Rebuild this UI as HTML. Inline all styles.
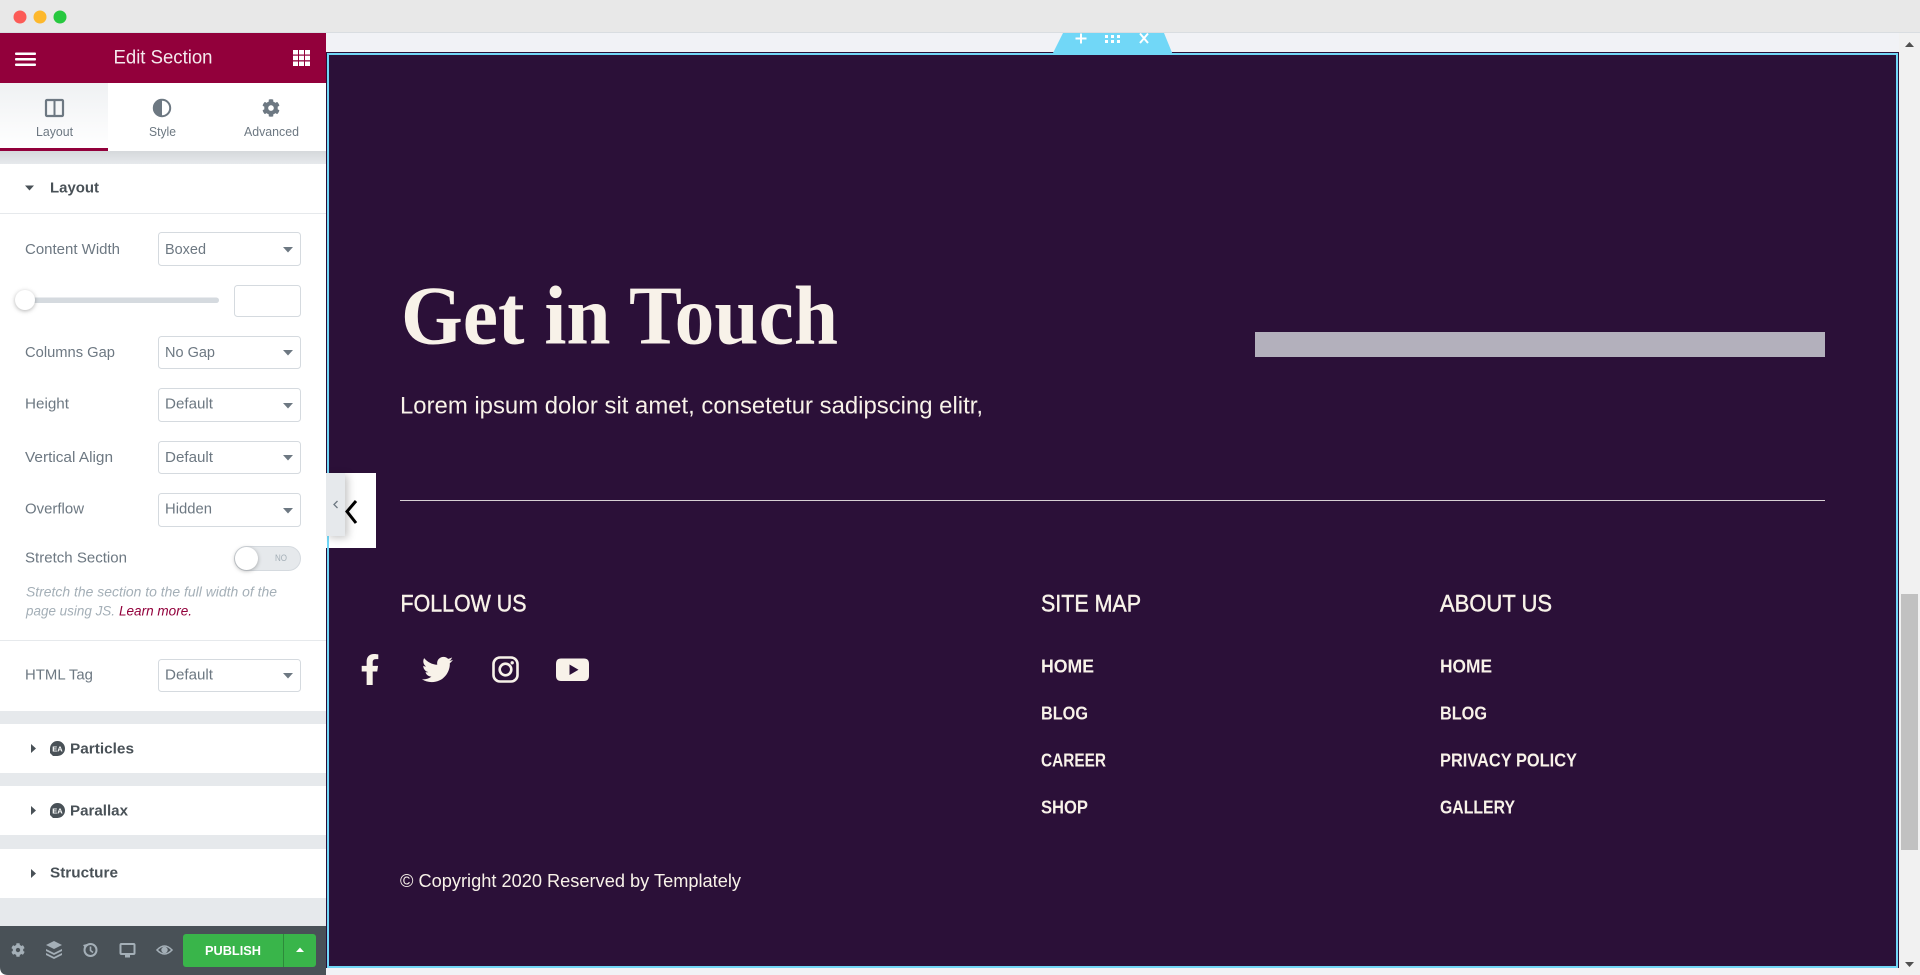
<!DOCTYPE html>
<html lang="en">
<head>
<meta charset="utf-8">
<title>Edit Section</title>
<style>
html,body{margin:0;padding:0;width:1920px;height:975px;overflow:hidden;background:#f1f2f6}
svg{display:block}
text{font-family:"Liberation Sans",sans-serif}
.lbl{font-size:14.5px;fill:#6d7882}
.tab{font-size:12.5px;fill:#6d7882}
.sec{font-size:14.5px;font-weight:700;fill:#495157}
.cream{fill:#f8f2e9}
.link{font-size:18px;font-weight:700;fill:#f8f2e9}
.hd{font-size:24px;fill:#f8f2e9;stroke:#f8f2e9;stroke-width:.45px}
.sel{fill:#fff;stroke:#d5dadf;stroke-width:1}
.shadow{filter:drop-shadow(0 1px 2px rgba(0,0,0,.3))}
.shadow2{filter:drop-shadow(3px 2px 4px rgba(0,0,0,.22))}
</style>
</head>
<body>
<svg width="1920" height="975" viewBox="0 0 1920 975" xmlns="http://www.w3.org/2000/svg">
<defs>
<linearGradient id="tabg" x1="0" y1="0" x2="0" y2="1"><stop offset="0" stop-color="#eff1f3"/><stop offset="1" stop-color="#ffffff"/></linearGradient>
<linearGradient id="shg" x1="0" y1="0" x2="0" y2="1"><stop offset="0" stop-color="#d5d8db"/><stop offset="1" stop-color="#e6e9ec"/></linearGradient>
<path id="cog" d="M487.4 315.7l-42.6-24.6c4.3-23.2 4.3-47 0-70.2l42.6-24.6c4.9-2.8 7.1-8.6 5.5-14-11.1-35.6-30-67.8-54.7-94.6-3.8-4.1-10-5.1-14.8-2.3L380.8 110c-17.9-15.4-38.5-27.3-60.8-35.1V25.8c0-5.6-3.9-10.5-9.4-11.7-36.7-8.2-74.3-7.8-109.2 0-5.5 1.2-9.4 6.1-9.4 11.7V75c-22.2 7.9-42.8 19.8-60.8 35.1L88.7 85.5c-4.9-2.8-11-1.9-14.8 2.3-24.7 26.7-43.6 58.9-54.7 94.6-1.7 5.4.6 11.2 5.5 14L67.3 221c-4.3 23.2-4.3 47 0 70.2l-42.6 24.6c-4.9 2.8-7.1 8.6-5.5 14 11.1 35.6 30 67.8 54.7 94.6 3.8 4.1 10 5.1 14.8 2.3l42.6-24.6c17.9 15.4 38.5 27.3 60.8 35.1v49.2c0 5.6 3.9 10.5 9.4 11.7 36.7 8.2 74.3 7.8 109.2 0 5.5-1.2 9.4-6.1 9.4-11.7v-49.2c22.2-7.9 42.8-19.8 60.8-35.1l42.6 24.6c4.9 2.8 11 1.9 14.8-2.3 24.7-26.7 43.6-58.9 54.7-94.6 1.5-5.5-.7-11.3-5.6-14.1zM256 336c-44.1 0-80-35.9-80-80s35.9-80 80-80 80 35.9 80 80-35.9 80-80 80z"/>
</defs>

<!-- canvas background -->
<rect x="0" y="0" width="1920" height="975" fill="#f1f2f6"/>

<!-- window chrome -->
<rect x="0" y="0" width="1920" height="33" fill="#e8e8e8"/>
<rect x="0" y="32" width="1920" height="1" fill="#d9dde1"/>
<circle cx="20" cy="17" r="6.5" fill="#fc5b57"/>
<circle cx="40" cy="17" r="6.5" fill="#fdb82c"/>
<circle cx="60" cy="17" r="6.5" fill="#27c83f"/>

<!-- section -->
<rect x="326" y="52" width="1573" height="916" fill="#2b1038"/>
<rect x="328" y="54" width="1569" height="913" fill="none" stroke="#71d7f7" stroke-width="2"/>

<!-- section handle -->
<path d="M1063 33H1164L1173 55H1052Z" fill="#71d7f7"/>
<path d="M1081 33.5V43.5M1075.5 38.5H1086.5" stroke="#fff" stroke-width="2" fill="none"/>
<g fill="#fff">
<rect x="1105" y="35" width="3" height="3"/><rect x="1111" y="35" width="3" height="3"/><rect x="1117" y="35" width="3" height="3"/>
<rect x="1105" y="40" width="3" height="3"/><rect x="1111" y="40" width="3" height="3"/><rect x="1117" y="40" width="3" height="3"/>
</g>
<path d="M1140 33.5L1148 43M1148 33.5L1140 43" stroke="#fff" stroke-width="2" fill="none"/>

<!-- hero -->
<text x="401" y="343.5" font-size="84" font-weight="700" class="cream" style="font-family:'Liberation Serif',serif" textLength="437" lengthAdjust="spacingAndGlyphs">Get in Touch</text>
<text x="400" y="413.5" font-size="24" class="cream" textLength="583" lengthAdjust="spacingAndGlyphs">Lorem ipsum dolor sit amet, consetetur sadipscing elitr,</text>
<rect x="1255" y="332" width="570" height="25" fill="#b3b0bc"/>
<rect x="400" y="500" width="1425" height="1" fill="#d8d0d4"/>

<!-- footer cols -->
<text x="400.5" y="611.5" class="hd" textLength="126" lengthAdjust="spacingAndGlyphs">FOLLOW US</text>
<text x="1041" y="611.5" class="hd" textLength="100" lengthAdjust="spacingAndGlyphs">SITE MAP</text>
<text x="1440" y="611.5" class="hd" textLength="112" lengthAdjust="spacingAndGlyphs">ABOUT US</text>

<text x="1041" y="672.5" class="link" textLength="53" lengthAdjust="spacingAndGlyphs">HOME</text>
<text x="1041" y="719.5" class="link" textLength="47" lengthAdjust="spacingAndGlyphs">BLOG</text>
<text x="1041" y="766.5" class="link" textLength="65" lengthAdjust="spacingAndGlyphs">CAREER</text>
<text x="1041" y="813.5" class="link" textLength="47" lengthAdjust="spacingAndGlyphs">SHOP</text>
<text x="1440" y="672.5" class="link" textLength="52" lengthAdjust="spacingAndGlyphs">HOME</text>
<text x="1440" y="719.5" class="link" textLength="47" lengthAdjust="spacingAndGlyphs">BLOG</text>
<text x="1440" y="766.5" class="link" textLength="137" lengthAdjust="spacingAndGlyphs">PRIVACY POLICY</text>
<text x="1440" y="813.5" class="link" textLength="75" lengthAdjust="spacingAndGlyphs">GALLERY</text>

<text x="400" y="887" font-size="18" class="cream" textLength="341" lengthAdjust="spacingAndGlyphs">© Copyright 2020 Reserved by Templately</text>

<!-- social icons -->
<svg x="360" y="654" width="20" height="31" viewBox="0 0 320 512" preserveAspectRatio="xMidYMid meet"><path fill="#f8f2e9" d="M279.14 288l14.22-92.66h-88.91v-60.13c0-25.35 12.42-50.06 52.24-50.06h40.42V6.26S260.43 0 225.36 0c-73.22 0-121.08 44.38-121.08 124.72v70.62H22.89V288h81.39v224h100.17V288z"/></svg>
<svg x="422" y="654" width="31" height="31" viewBox="0 0 512 512"><path fill="#f8f2e9" d="M459.37 151.716c.325 4.548.325 9.097.325 13.645 0 138.72-105.583 298.558-298.558 298.558-59.452 0-114.68-17.219-161.137-47.106 8.447.974 16.568 1.299 25.34 1.299 49.055 0 94.213-16.568 130.274-44.832-46.132-.975-84.792-31.188-98.112-72.772 6.498.974 12.995 1.624 19.818 1.624 9.421 0 18.843-1.3 27.614-3.573-48.081-9.747-84.143-51.98-84.143-102.985v-1.299c13.969 7.797 30.214 12.67 47.431 13.319-28.264-18.843-46.781-51.005-46.781-87.391 0-19.492 5.197-37.36 14.294-52.954 51.655 63.675 129.3 105.258 216.365 109.807-1.624-7.797-2.599-15.918-2.599-24.04 0-57.828 46.782-104.934 104.934-104.934 30.213 0 57.502 12.67 76.67 33.137 23.715-4.548 46.456-13.645 66.599-25.34-7.798 24.366-24.366 44.833-46.132 57.827 21.117-2.273 41.584-8.122 60.426-16.243-14.292 20.791-32.161 39.308-52.628 54.253z"/></svg>
<rect x="493.5" y="657.5" width="24" height="24" rx="6.5" fill="none" stroke="#f8f2e9" stroke-width="2.6"/>
<circle cx="505.5" cy="669.5" r="5.8" fill="none" stroke="#f8f2e9" stroke-width="2.6"/>
<circle cx="512.2" cy="662.8" r="1.7" fill="#f8f2e9"/>
<path fill="#f8f2e9" fill-rule="evenodd" d="M561 658.5H584Q589 658.5 589 664V675.5Q589 681 584 681H561Q556 681 556 675.5V664Q556 658.5 561 658.5ZM569.5 664.5V675L578.5 669.8Z"/>

<!-- scrollbar -->
<rect x="1899" y="33" width="21" height="942" fill="#f1f1f1"/>
<rect x="1901" y="594" width="17" height="256" fill="#c1c1c1"/>
<path d="M1905 47L1909.5 42L1914 47Z" fill="#505050"/>
<path d="M1905 962L1909.5 967L1914 962Z" fill="#505050"/>
<rect x="0" y="968" width="1899" height="7" fill="#f1f2f6"/>

<!-- collapse handle -->
<rect x="326" y="473" width="50" height="75" fill="#fff"/>
<rect x="327" y="536" width="2" height="12" fill="#71d7f7"/>
<rect class="shadow2" x="326" y="473" width="19" height="63" fill="#e6e9ec"/>
<path d="M337.5 501L334 504.5L337.5 508" stroke="#6d7882" stroke-width="1.3" fill="none"/>
<path d="M356 501L347 511.5L356 523" stroke="#000" stroke-width="3" fill="none"/>

<!-- panel -->
<rect x="0" y="33" width="326" height="942" fill="#fff"/>
<rect x="0" y="33" width="326" height="50" fill="#92003b"/>
<g fill="#fff">
<rect x="15" y="52.5" width="21" height="2.5" rx="1"/><rect x="15" y="58" width="21" height="2.5" rx="1"/><rect x="15" y="63.5" width="21" height="2.5" rx="1"/>
<rect x="293" y="50" width="5" height="4.5"/><rect x="299" y="50" width="5" height="4.5"/><rect x="305" y="50" width="5" height="4.5"/>
<rect x="293" y="55.7" width="5" height="4.5"/><rect x="299" y="55.7" width="5" height="4.5"/><rect x="305" y="55.7" width="5" height="4.5"/>
<rect x="293" y="61.5" width="5" height="4.5"/><rect x="299" y="61.5" width="5" height="4.5"/><rect x="305" y="61.5" width="5" height="4.5"/>
</g>
<text x="113.5" y="63.5" font-size="19" fill="#f4e9ed" textLength="99" lengthAdjust="spacingAndGlyphs">Edit Section</text>

<!-- tabs -->
<rect x="0" y="83" width="108" height="65" fill="url(#tabg)"/>
<rect x="0" y="148" width="108" height="3" fill="#92003b"/>
<rect x="46" y="100" width="17" height="16" rx="1" fill="none" stroke="#6d7882" stroke-width="2.2"/>
<rect x="53.5" y="100" width="2" height="16" fill="#6d7882"/>
<circle cx="162" cy="108" r="8.2" fill="#fff" stroke="#6d7882" stroke-width="2"/>
<path d="M162 99A9 9 0 0 0 162 117Z" fill="#6d7882"/>
<svg x="262" y="99" width="18" height="18" viewBox="0 0 512 512"><use href="#cog" fill="#6d7882"/></svg>
<text x="36" y="136" class="tab" textLength="37" lengthAdjust="spacingAndGlyphs">Layout</text>
<text x="149" y="136" class="tab" textLength="27" lengthAdjust="spacingAndGlyphs">Style</text>
<text x="244" y="136" class="tab" textLength="55" lengthAdjust="spacingAndGlyphs">Advanced</text>

<!-- Layout section -->
<rect x="0" y="151" width="326" height="13" fill="url(#shg)"/>
<path d="M25 185.5H34L29.5 190.5Z" fill="#495157"/>
<text x="50" y="192.5" class="sec" textLength="49" lengthAdjust="spacingAndGlyphs">Layout</text>
<rect x="0" y="213" width="326" height="1" fill="#e6e9ec"/>

<text x="25" y="254" class="lbl" textLength="95" lengthAdjust="spacingAndGlyphs">Content Width</text>
<rect class="sel" x="158.5" y="232.5" width="142" height="33" rx="3"/>
<text x="165" y="254" class="lbl" textLength="41" lengthAdjust="spacingAndGlyphs">Boxed</text>
<path d="M283 247H293L288 252.5Z" fill="#6d7882"/>

<rect x="30" y="297.5" width="189" height="5.5" rx="2.7" fill="#d5dadf"/>
<circle class="shadow" cx="25" cy="300" r="10" fill="#fff"/>
<rect class="sel" x="234.5" y="285.5" width="66" height="31" rx="3"/>

<text x="25" y="357" class="lbl" textLength="90" lengthAdjust="spacingAndGlyphs">Columns Gap</text>
<rect class="sel" x="158.5" y="336.5" width="142" height="32" rx="3"/>
<text x="165" y="357" class="lbl" textLength="50" lengthAdjust="spacingAndGlyphs">No Gap</text>
<path d="M283 350H293L288 355.5Z" fill="#6d7882"/>

<text x="25" y="408.5" class="lbl" textLength="44" lengthAdjust="spacingAndGlyphs">Height</text>
<rect class="sel" x="158.5" y="388.5" width="142" height="33" rx="3"/>
<text x="165" y="408.5" class="lbl" textLength="48" lengthAdjust="spacingAndGlyphs">Default</text>
<path d="M283 403H293L288 408.5Z" fill="#6d7882"/>

<text x="25" y="462" class="lbl" textLength="88" lengthAdjust="spacingAndGlyphs">Vertical Align</text>
<rect class="sel" x="158.5" y="441.5" width="142" height="32" rx="3"/>
<text x="165" y="462" class="lbl" textLength="48" lengthAdjust="spacingAndGlyphs">Default</text>
<path d="M283 455H293L288 460.5Z" fill="#6d7882"/>

<text x="25" y="513.5" class="lbl" textLength="59" lengthAdjust="spacingAndGlyphs">Overflow</text>
<rect class="sel" x="158.5" y="493.5" width="142" height="33" rx="3"/>
<text x="165" y="513.5" class="lbl" textLength="47" lengthAdjust="spacingAndGlyphs">Hidden</text>
<path d="M283 508H293L288 513.5Z" fill="#6d7882"/>

<text x="25" y="562.5" class="lbl" textLength="102" lengthAdjust="spacingAndGlyphs">Stretch Section</text>
<rect x="234.5" y="546.5" width="66" height="24" rx="12" fill="#e6e9ec" stroke="#d5dadf"/>
<circle class="shadow" cx="246.5" cy="558.5" r="11.5" fill="#fff"/>
<text x="275" y="561" font-size="9" fill="#a4afb7" textLength="12" lengthAdjust="spacingAndGlyphs">NO</text>

<text x="26" y="596.5" font-size="13.5" font-style="italic" fill="#a4afb7" textLength="251" lengthAdjust="spacingAndGlyphs">Stretch the section to the full width of the</text>
<text x="26" y="615.5" font-size="13.5" font-style="italic" fill="#a4afb7" textLength="89" lengthAdjust="spacingAndGlyphs">page using JS.</text>
<text x="119" y="615.5" font-size="13.5" font-style="italic" fill="#92003b" textLength="73" lengthAdjust="spacingAndGlyphs">Learn more.</text>
<rect x="0" y="640" width="326" height="1" fill="#e6e9ec"/>

<text x="25" y="679.5" class="lbl" textLength="68" lengthAdjust="spacingAndGlyphs">HTML Tag</text>
<rect class="sel" x="158.5" y="659.5" width="142" height="32" rx="3"/>
<text x="165" y="679.5" class="lbl" textLength="48" lengthAdjust="spacingAndGlyphs">Default</text>
<path d="M283 673H293L288 678.5Z" fill="#6d7882"/>

<!-- collapsed sections -->
<rect x="0" y="711" width="326" height="13" fill="#e6e9ec"/>
<path d="M31 744L36 748.5L31 753Z" fill="#495157"/>
<path d="M57.5 741A7.5 7.5 0 1 1 57.5 756H53L50 753V748.5A7.5 7.5 0 0 1 57.5 741Z" fill="#495157"/>
<text x="57.5" y="751.5" font-size="7.5" font-weight="700" fill="#fff" text-anchor="middle">EA</text>
<text x="70" y="753.5" class="sec" textLength="64" lengthAdjust="spacingAndGlyphs">Particles</text>

<rect x="0" y="773" width="326" height="13" fill="#e6e9ec"/>
<path d="M31 806L36 810.5L31 815Z" fill="#495157"/>
<path d="M57.5 803A7.5 7.5 0 1 1 57.5 818H53L50 815V810.5A7.5 7.5 0 0 1 57.5 803Z" fill="#495157"/>
<text x="57.5" y="813.5" font-size="7.5" font-weight="700" fill="#fff" text-anchor="middle">EA</text>
<text x="70" y="815.5" class="sec" textLength="58" lengthAdjust="spacingAndGlyphs">Parallax</text>

<rect x="0" y="835" width="326" height="14" fill="#e6e9ec"/>
<path d="M31 869L36 873.5L31 878Z" fill="#495157"/>
<text x="50" y="877.5" class="sec" textLength="68" lengthAdjust="spacingAndGlyphs">Structure</text>

<rect x="0" y="898" width="326" height="28" fill="#e6e9ec"/>

<!-- bottom bar -->
<path d="M0 926H326V975H8Q0 975 0 967Z" fill="#495157"/>
<svg x="11" y="943" width="14" height="14" viewBox="0 0 512 512"><use href="#cog" fill="#a4afb7"/></svg>
<g fill="#a4afb7">
<path d="M54 941L62 945L54 949L46 945Z"/>
<path d="M46 949L54 953L62 949V951L54 955L46 951Z"/>
<path d="M46 953L54 957L62 953V955L54 959L46 955Z"/>
</g>
<circle cx="90.5" cy="950" r="6" fill="none" stroke="#a4afb7" stroke-width="2"/>
<path d="M90.5 946.5V950.5L93 952.5" fill="none" stroke="#a4afb7" stroke-width="1.6"/>
<path d="M83 945L87 944L85 948Z" fill="#a4afb7"/>
<rect x="120.5" y="944" width="14" height="10" rx="1" fill="none" stroke="#a4afb7" stroke-width="2"/>
<rect x="125" y="955" width="5" height="2.5" fill="#a4afb7"/>
<path d="M157 950Q164.5 942 172 950Q164.5 958 157 950Z" fill="none" stroke="#a4afb7" stroke-width="1.6"/>
<circle cx="164.5" cy="950" r="3.2" fill="#a4afb7"/>

<rect x="183" y="934" width="133" height="33" rx="3" fill="#39b54a"/>
<rect x="283" y="934" width="1" height="33" fill="#2d8a3a"/>
<text x="205" y="955" font-size="13" font-weight="700" fill="#fff" textLength="56" lengthAdjust="spacingAndGlyphs">PUBLISH</text>
<path d="M296 952L300 947.5L304 952Z" fill="#fff"/>
</svg>
</body>
</html>
